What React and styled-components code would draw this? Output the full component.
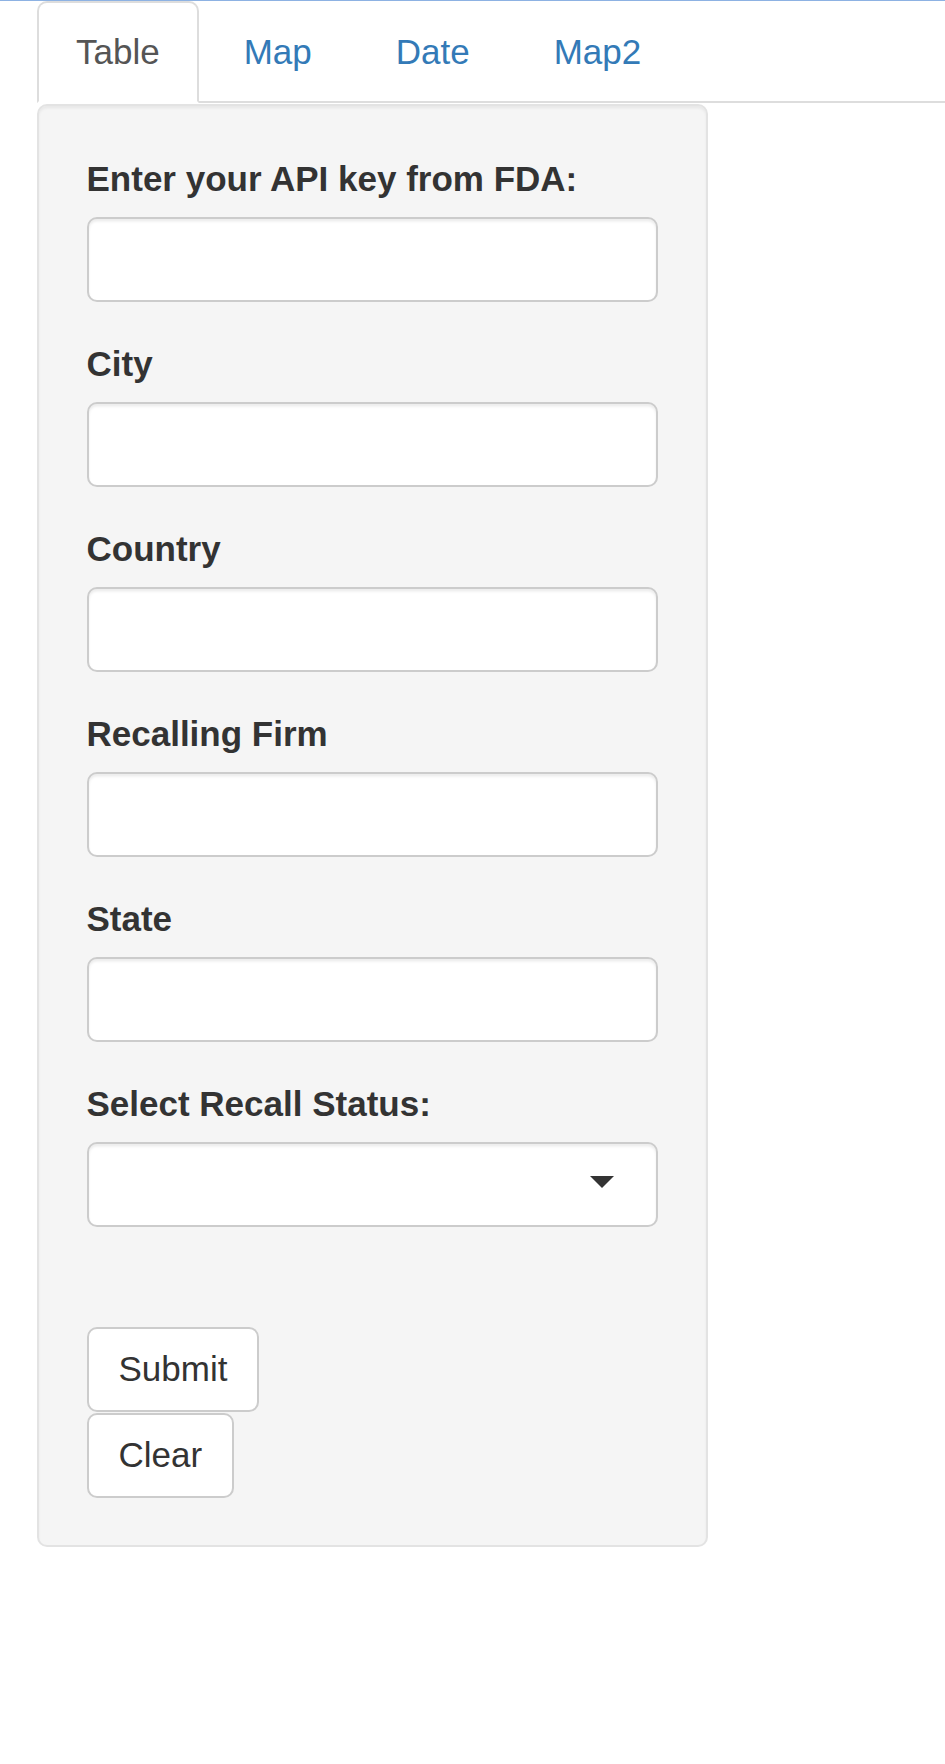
import styled, { createGlobalStyle } from "styled-components"

const GlobalStyle = createGlobalStyle`
  html, body {
    margin: 0;
    padding: 0;
    background: #fff;
  }

  body {
    font-family: "Liberation Sans", Arial, Helvetica, sans-serif;
    font-size: 35px;
    line-height: 50px;
    color: #333;
  }

  * {
    box-sizing: border-box;
  }
`

const Page = styled.div`
  min-height: 1764px;
  border-top: 1px solid #8db2e3;
  padding: 0 0 0 36.5px;
`

const NavTabs = styled.ul`
  display: flex;
  list-style: none;
  margin: 0;
  padding: 0;
  border-bottom: 2px solid #ddd;
`

const TabItem = styled.li`
  margin-bottom: -2px;
`

const TabLink = styled.a`
  display: block;
  margin-right: 5px;
  padding: 24px 37.5px;
  line-height: 50px;
  border: 2px solid transparent;
  border-radius: 10px 10px 0 0;
  text-decoration: none;
  color: ${(p) => (p.$active ? "#555" : "#337ab7")};
  background: ${(p) => (p.$active ? "#fff" : "transparent")};
  border-color: ${(p) => (p.$active ? "#ddd #ddd transparent" : "transparent")};
  cursor: pointer;
`

const Well = styled.form`
  width: 671px;
  margin-top: 1px;
  padding: 48px 48px 47px;
  background: #f5f5f5;
  border: 2px solid #e3e3e3;
  border-radius: 10px;
  box-shadow: inset 0 2.5px 2.5px rgba(0, 0, 0, 0.05);
`

const FormGroup = styled.div`
  margin-bottom: ${(p) => p.$gap || "37.5px"};
`

const Label = styled.label`
  display: inline-block;
  margin-bottom: 12.5px;
  font-weight: bold;
  color: #333;
`

const TextInput = styled.input`
  display: block;
  width: 100%;
  height: 85px;
  padding: 15px 30px;
  font: inherit;
  color: #555;
  background: #fff;
  border: 2px solid #ccc;
  border-radius: 10px;
  box-shadow: inset 0 2.5px 2.5px rgba(0, 0, 0, 0.075);
  outline: none;
`

const SelectBox = styled.div`
  position: relative;
  width: 100%;
  height: 85px;
  background: #fff;
  border: 2px solid #ccc;
  border-radius: 10px;
  box-shadow: inset 0 2.5px 2.5px rgba(0, 0, 0, 0.075);
  cursor: pointer;

  &::after {
    content: "";
    position: absolute;
    right: 42px;
    top: 32px;
    width: 0;
    height: 0;
    border-style: solid;
    border-width: 12.5px 12.5px 0 12.5px;
    border-color: #333 transparent transparent transparent;
  }
`

const ButtonStack = styled.div`
  display: flex;
  flex-direction: column;
  align-items: flex-start;
  gap: 1px;
`

const Button = styled.button`
  height: 85px;
  padding: 0 30px;
  font: inherit;
  line-height: 50px;
  color: #333;
  background: #fff;
  border: 2px solid #ccc;
  border-radius: 10px;
  cursor: pointer;
`

const tabs = ["Table", "Map", "Date", "Map2"]

const fields = [
  { id: "api_key", label: "Enter your API key from FDA:" },
  { id: "city", label: "City" },
  { id: "country", label: "Country" },
  { id: "firm", label: "Recalling Firm" },
  { id: "state", label: "State" },
]

export default function App() {
  return (
    <>
      <GlobalStyle />
      <Page>
        <NavTabs>
          {tabs.map((t, i) => (
            <TabItem key={t}>
              <TabLink $active={i === 0}>{t}</TabLink>
            </TabItem>
          ))}
        </NavTabs>

        <Well onSubmit={(e) => e.preventDefault()}>
          {fields.map((f) => (
            <FormGroup key={f.id}>
              <Label htmlFor={f.id}>{f.label}</Label>
              <TextInput id={f.id} type="text" />
            </FormGroup>
          ))}

          <FormGroup $gap="100px">
            <Label>Select Recall Status:</Label>
            <SelectBox />
          </FormGroup>

          <ButtonStack>
            <Button type="submit">Submit</Button>
            <Button type="button">Clear</Button>
          </ButtonStack>
        </Well>
      </Page>
    </>
  )
}
